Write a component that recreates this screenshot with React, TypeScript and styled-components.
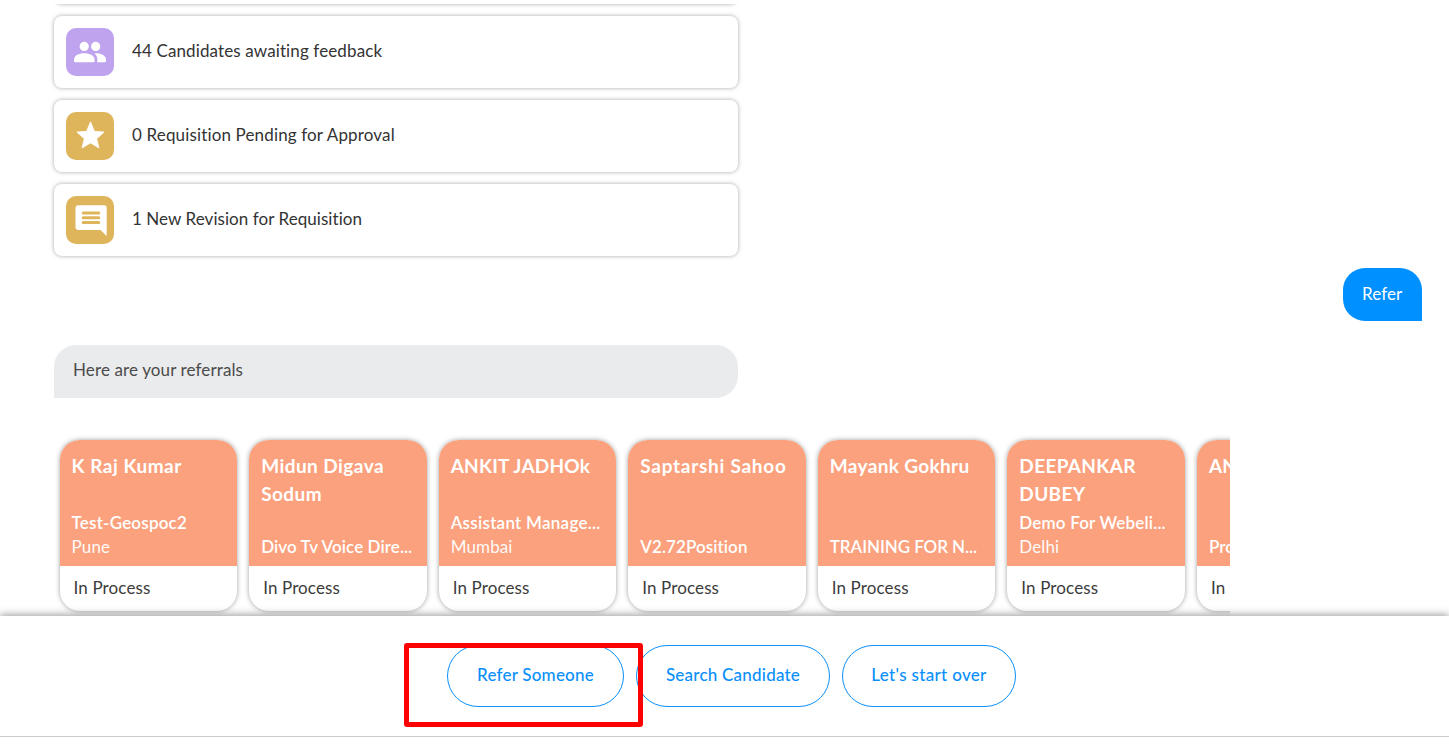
import React from "react";
import styled, { createGlobalStyle } from "styled-components";

const GlobalStyle = createGlobalStyle`
  * { box-sizing: border-box; }
  body {
    margin: 0;
    background: #fff;
    color: #3c3c3c;
    font: 400 17px/24px Lato, "Open Sans", sans-serif;
    letter-spacing: 0.12px;
  }
`;

const Screen = styled.div`
  display: flex;
  flex-direction: column;
  height: 744px;
  padding: 4px 0 7px;
  overflow: hidden;
`;

const Feed = styled.main`
  flex: 1;
  min-height: 0;
  display: flex;
  flex-direction: column;
  justify-content: flex-end;
  padding: 0 27px 0 54px;
  overflow: hidden;
`;

const TaskList = styled.div`
  flex: none;
  display: flex;
  flex-direction: column;
  gap: 12px;
  width: 684px;
`;

const TaskCard = styled.div`
  display: flex;
  align-items: center;
  gap: 18px;
  height: 72px;
  padding: 0 12px;
  border-radius: 8px;
  background: #fff;
  box-shadow: 0 0 4px rgba(0, 0, 0, 0.35);
`;

const IconTile = styled.span<{ $color: string }>`
  display: flex;
  width: 48px;
  height: 48px;
  border-radius: 10px;
  background: ${(p) => p.$color};
`;

const TaskText = styled.span<{ $tracking: number }>`
  color: #333;
  padding-bottom: 2px;
  letter-spacing: ${(p) => p.$tracking}px;
`;

const UserBubble = styled.div`
  flex: none;
  align-self: flex-end;
  width: 79px;
  height: 53px;
  margin-top: 12px;
  padding: 14px 0 0 19px;
  border-radius: 22px 22px 0 22px;
  background: #0090ff;
  color: #fff;
`;

const BotBubble = styled.div`
  flex: none;
  width: 684px;
  height: 53px;
  margin-top: 24px;
  padding: 13px 19px;
  border-radius: 22px 22px 22px 0;
  background: #eaebed;
  color: #4a4a4a;
`;

const Carousel = styled.div`
  flex: none;
  display: flex;
  gap: 12px;
  width: 1176px;
  margin-top: 36px;
  padding: 6px 6px 5px 5.6px;
  overflow: hidden;
`;

const ReferralCard = styled.article`
  flex: none;
  width: 177.55px;
  height: 171px;
  border-radius: 20px;
  background: #fff;
  box-shadow: 0 0 5px rgba(0, 0, 0, 0.38);
  overflow: hidden;
`;

const ReferralHead = styled.div`
  display: flex;
  flex-direction: column;
  height: 126px;
  padding: 12px 12px 7px;
  background: #fba17d;
  color: #fff;
`;

const Name = styled.h3<{ $tracking: number }>`
  flex: 1;
  margin: 0;
  font-size: 19px;
  font-weight: 700;
  line-height: 28px;
  letter-spacing: ${(p) => p.$tracking}px;
`;

const Position = styled.div<{ $tracking: number }>`
  font-weight: 600;
  white-space: nowrap;
  letter-spacing: ${(p) => p.$tracking}px;
`;

const Place = styled.div`
  opacity: 0.95;
`;

const Status = styled.div`
  padding: 10px 14px;
  white-space: nowrap;
`;

const ActionBar = styled.footer`
  position: relative;
  z-index: 1;
  flex: none;
  display: flex;
  justify-content: center;
  align-items: flex-start;
  gap: 12px;
  height: 121px;
  padding: 29px 0 0 14px;
  border-bottom: 1px solid #ccc;
  background: #fff;
  box-shadow: 0 -1px 8px rgba(0, 0, 0, 0.42);
  clip-path: inset(-16px 0 0 0);
`;

const ActionButton = styled.button<{ $width: number; $tracking: number }>`
  width: ${(p) => p.$width}px;
  height: 62px;
  padding: 0 0 2px;
  border: 1px solid #0a8ffb;
  border-radius: 31px;
  background: #fff;
  color: #0a8ffb;
  font: inherit;
  font-weight: 500;
  letter-spacing: ${(p) => p.$tracking}px;
`;

const Highlight = styled.div`
  position: absolute;
  left: 404px;
  top: 27px;
  width: 239px;
  height: 84px;
  border: 5px solid #f00;
  border-radius: 3px;
  pointer-events: none;
`;

const PeopleIcon = () => (
  <svg width="48" height="48" viewBox="0 0 48 48" fill="#fff">
    <circle cx="18.2" cy="18.4" r="4.6" />
    <circle cx="29.7" cy="18.4" r="4.6" />
    <path d="M8 31.6C8 27.4 13 25.2 18.2 25.2s10.4 2.2 10.4 6.4v1.5a1.2 1.2 0 0 1-1.2 1.2H9.2A1.2 1.2 0 0 1 8 33.1z" />
    <path d="M28.3 25.3C34.5 24.7 40 27.5 40 31.6v1.5a1.2 1.2 0 0 1-1.2 1.2h-7.6c.5-3.6.2-6.5-2.9-9z" />
  </svg>
);

const StarIcon = () => (
  <svg width="48" height="48" viewBox="0 0 48 48" fill="#fff" stroke="#fff" strokeWidth="0.8" strokeLinejoin="round">
    <path d="M24.5 9.8l3.9 9.5 9.7.8-7.4 6.6 2.3 9.3-8.5-5.1-8.5 5.1 2.3-9.3-7.4-6.6 9.7-.8z" />
  </svg>
);

const CommentIcon = () => (
  <svg width="48" height="48" viewBox="0 0 48 48">
    <path fill="#fff" d="M12.300 9.300h25.600a2.800 2.800 0 0 1 2.800 2.800V40l-6.200-6.100H12.300a2.800 2.800 0 0 1-2.800-2.800v-19a2.800 2.800 0 0 1 2.800-2.800z" />
    <path stroke="#dfb55b" strokeWidth="3" strokeLinecap="round" d="M17.200 16.900h15.600M17.200 21.800h15.600M17.200 26.600h15.600" />
  </svg>
);

const tasks = [
  { text: "44 Candidates awaiting feedback", tracking: 0.12, color: "#bfa3ee", icon: <PeopleIcon /> },
  { text: "0 Requisition Pending for Approval", tracking: 0.15, color: "#dfb55b", icon: <StarIcon /> },
  { text: "1 New Revision for Requisition", tracking: 0.06, color: "#dfb55b", icon: <CommentIcon /> },
];

const referrals = [
  { name: "K Raj Kumar", nameTracking: 0.5, position: "Test-Geospoc2", tracking: 0.2, place: "Pune" },
  { name: "Midun Digava Sodum", nameTracking: 0.45, position: "Divo Tv Voice Dire...", tracking: 0.08 },
  { name: "ANKIT JADHOk", nameTracking: 0.2, position: "Assistant Manage...", tracking: 0.26, place: "Mumbai" },
  { name: "Saptarshi Sahoo", nameTracking: 0.73, position: "V2.72Position", tracking: 0.08 },
  { name: "Mayank Gokhru", nameTracking: 0.35, position: "TRAINING FOR N...", tracking: -0.08 },
  { name: "DEEPANKAR DUBEY", nameTracking: 0.35, position: "Demo For Webeli...", tracking: 0.18, place: "Delhi" },
  { name: "ANKIT", nameTracking: 0.2, position: "Product", tracking: 0.1 },
];

export default function App() {
  return (
    <Screen>
      <GlobalStyle />
      <Feed>
        <TaskList>
          <TaskCard />
          {tasks.map((t) => (
            <TaskCard key={t.text}>
              <IconTile $color={t.color}>{t.icon}</IconTile>
              <TaskText $tracking={t.tracking}>{t.text}</TaskText>
            </TaskCard>
          ))}
        </TaskList>
        <UserBubble>Refer</UserBubble>
        <BotBubble>Here are your referrals</BotBubble>
        <Carousel>
          {referrals.map((r) => (
            <ReferralCard key={r.name}>
              <ReferralHead>
                <Name $tracking={r.nameTracking}>{r.name}</Name>
                <Position $tracking={r.tracking}>{r.position}</Position>
                {r.place && <Place>{r.place}</Place>}
              </ReferralHead>
              <Status>In Process</Status>
            </ReferralCard>
          ))}
        </Carousel>
      </Feed>
      <ActionBar>
        <ActionButton $width={177} $tracking={0.22}>Refer Someone</ActionButton>
        <ActionButton $width={194} $tracking={0.22}>Search Candidate</ActionButton>
        <ActionButton $width={174} $tracking={0.32}>Let's start over</ActionButton>
        <Highlight />
      </ActionBar>
    </Screen>
  );
}
